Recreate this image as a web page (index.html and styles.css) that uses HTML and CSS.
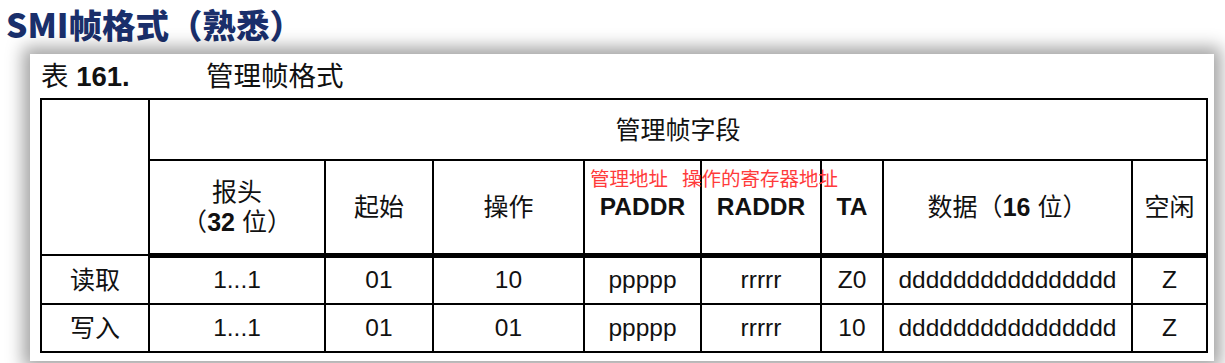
FILE: index.html
```html
<!DOCTYPE html>
<html lang="zh">
<head>
<meta charset="utf-8">
<title>SMI帧格式</title>
<link rel="stylesheet" href="styles.css">
</head>
<body>
<h1 class="title">SMI帧格式（熟悉）</h1>
<div class="card">
  <div class="caption"><span class="cap-num">表 <b>161.</b></span><span class="cap-name">管理帧格式</span></div>
  <table class="frame">
    <colgroup>
      <col class="c1"><col class="c2"><col class="c3"><col class="c4"><col class="c5"><col class="c6"><col class="c7"><col class="c8"><col class="c9">
    </colgroup>
    <tr class="h1">
      <td rowspan="2"></td>
      <td colspan="8" class="cjk">管理帧字段</td>
    </tr>
    <tr class="h2">
      <td class="cjk">报头<br>（<b>32</b> 位）</td>
      <td class="cjk">起始</td>
      <td class="cjk">操作</td>
      <td><b>PADDR</b></td>
      <td><b>RADDR</b></td>
      <td><b>TA</b></td>
      <td class="cjk">数据（<b>16</b> 位）</td>
      <td class="cjk">空闲</td>
    </tr>
    <tr class="r1">
      <td class="cjk">读取</td><td>1...1</td><td>01</td><td>10</td><td>ppppp</td><td>rrrrr</td><td>Z0</td><td>dddddddddddddddd</td><td>Z</td>
    </tr>
    <tr class="r2">
      <td class="cjk">写入</td><td>1...1</td><td>01</td><td>01</td><td>ppppp</td><td>rrrrr</td><td>10</td><td>dddddddddddddddd</td><td>Z</td>
    </tr>
  </table>
  <span class="note note-p">管理地址</span>
  <span class="note note-r">操作的寄存器地址</span>
</div>
</body>
</html>
```
FILE: styles.css
```css
html, body {
  margin: 0;
  padding: 0;
  background: #ffffff;
}
body {
  width: 1225px;
  height: 363px;
  overflow: hidden;
  font-family: "Liberation Sans", "Noto Sans CJK SC", sans-serif;
  color: #111;
}
.title {
  margin: 0;
  height: 54px;
  padding-left: 6px;
  font-family: "Noto Sans CJK SC", "Liberation Sans", sans-serif;
  font-weight: 900;
  font-size: 33.5px;
  line-height: 48px;
  color: #1a2f6b;
}
.card {
  position: relative;
  margin-left: 30px;
  width: 1184px;
  height: 307px;
  background: #fff;
  box-shadow: 0 0 16px 7px rgba(0, 0, 0, 0.36);
  padding-left: 10px;
  box-sizing: border-box;
}
.caption {
  display: flex;
  height: 44px;
  padding-top: 4px;
  box-sizing: border-box;
  font-size: 27.5px;
  line-height: 38px;
  color: #111;
}
.cap-num {
  width: 165px;
  padding-left: 1px;
}
.cap-num b {
  font-weight: 700;
}
.frame {
  border-collapse: collapse;
  table-layout: fixed;
  width: 1166px;
  font-size: 24.5px;
  text-align: center;
}
.frame td {
  border: 2px solid #000;
  padding: 0;
  vertical-align: middle;
  line-height: 30px;
}
.frame td.cjk {
  font-size: 25px;
}
.frame b {
  font-weight: 700;
}
.c1 { width: 108px; }
.c2 { width: 176px; }
.c3 { width: 108px; }
.c4 { width: 151px; }
.c5 { width: 117px; }
.c6 { width: 120px; }
.c7 { width: 62px; }
.c8 { width: 249px; }
.c9 { width: 75px; }
.h1 { height: 61px; }
.h2 { height: 95px; }
.h2 td { border-bottom: 5px solid #000; }
.r1 { height: 49px; }
.r2 { height: 48px; }
.note {
  position: absolute;
  top: 113px;
  font-family: "Noto Sans CJK SC", sans-serif;
  font-size: 19.5px;
  line-height: 22px;
  color: #ff3b3b;
  white-space: nowrap;
}
.note-p { left: 560px; }
.note-r { left: 652px; }
```
